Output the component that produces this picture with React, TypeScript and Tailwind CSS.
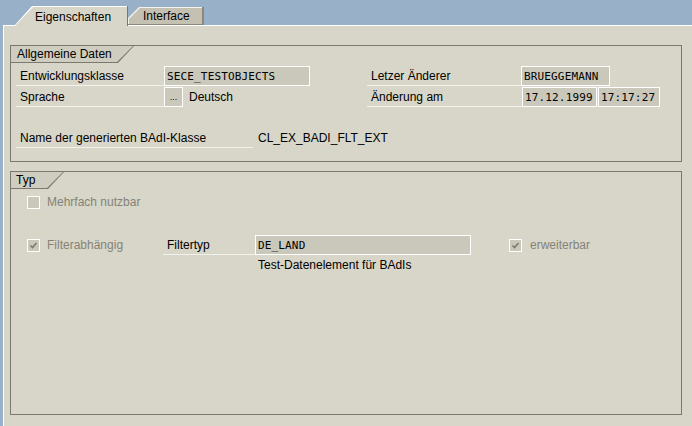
import React from "react";

const sans = "font-['Liberation_Sans',Arial,sans-serif]";
const mono = "font-['DejaVu_Sans_Mono',monospace]";

function GroupTitle({ label, outer, inner, pad }: { label: string; outer: string; inner: string; pad: string }) {
  // dark shape gives the bottom + slanted edge, the lighter one sits 1px inside it
  return (
    <div className={`${outer} h-[17px] bg-[#7b796e] [clip-path:polygon(0_0,100%_0,calc(100%_-_16px)_100%,0_100%)]`}>
      <div
        className={`${inner} ${pad} flex h-[16px] items-center bg-[#cfcdbf] text-[12px] text-black [clip-path:polygon(0_0,100%_0,calc(100%_-_16px)_100%,0_100%)]`}
      >
        {label}
      </div>
    </div>
  );
}

function Field({ value, width }: { value: string; width: string }) {
  return (
    <div className={`${width} ${mono} flex h-[20px] items-center border border-white bg-[#c9c8ba] pl-[2px] text-[11px] leading-none font-normal tracking-[0.15px] text-black`}>
      {value}
    </div>
  );
}

function Label({ text, width }: { text: string; width: string }) {
  return (
    <div className={`${width} flex h-[20px] items-center border-b border-[#f2f1ea] pl-[4px] text-[12px] text-black`}>
      {text}
    </div>
  );
}

function Check({ checked }: { checked?: boolean }) {
  return (
    <div className="flex h-[13px] w-[13px] items-center justify-center border border-white bg-[#cac8ba]">
      {checked && (
        <svg width="9" height="9" viewBox="0 0 9 9">
          <polyline points="1.5,4.5 3.5,6.5 7.5,2" fill="none" stroke="#7b796e" strokeWidth="1.6" />
        </svg>
      )}
    </div>
  );
}

export default function App() {
  return (
    <div className={`${sans} flex h-[426px] w-[692px] flex-col overflow-hidden bg-[#98b0c8]`}>
      {/* tab strip */}
      <div className="relative z-10 flex h-[25px] shrink-0 items-end pl-[14px]">
        <div className="-mb-px h-[20px] w-[114px] border-r border-[#7b796e] bg-white [clip-path:polygon(18px_0,100%_0,100%_100%,0_100%)]">
          <div className="mt-px ml-px flex h-[19px] items-center bg-[#d8d6c8] pl-[20px] text-[12px] text-black [clip-path:polygon(18px_0,100%_0,100%_100%,0_100%)]">
            Eigenschaften
          </div>
        </div>
        <div className="h-[18px] w-[76px] border-r-2 border-b border-[#8a887c] bg-[#f2f1ea] [clip-path:polygon(11px_0,100%_0,100%_100%,0_100%,0_11px)]">
          <div className="mt-px ml-px flex h-[16px] items-center bg-[#c4c1b3] pl-[14px] text-[12px] text-black [clip-path:polygon(11px_0,100%_0,100%_100%,0_100%,0_11px)]">
            Interface
          </div>
        </div>
      </div>

      {/* tab page */}
      <div className="ml-[3px] flex flex-1 flex-col border-t border-l border-white bg-[#d8d6c8] pt-[19px] pr-[10px] pl-[6px]">
        {/* Allgemeine Daten */}
        <div className="h-[117px] border border-[#7b796e]">
          <GroupTitle label="Allgemeine Daten" outer="w-[123px]" inner="w-[122px]" pad="pl-[6px]" />
          <div className="mt-[3px] flex flex-col pl-[5px]">
            <div className="flex h-[21px]">
              <div className="flex w-[351px]">
                <Label text="Entwicklungsklasse" width="w-[148px]" />
                <Field value="SECE_TESTOBJECTS" width="w-[146px]" />
              </div>
              <Label text="Letzer Änderer" width="w-[154px]" />
              <Field value="BRUEGGEMANN" width="w-[89px]" />
            </div>
            <div className="flex h-[21px]">
              <div className="flex w-[351px] items-start">
                <Label text="Sprache" width="w-[148px]" />
                <div className="flex h-[20px] w-[19px] items-end justify-center border border-white bg-[#c9c8ba] pb-[4px] text-[9px] leading-none">
                  ...
                </div>
                <div className="ml-[6px] flex h-[20px] items-center text-[12px] text-black">Deutsch</div>
              </div>
              <Label text="Änderung am" width="w-[155px]" />
              <div className="flex gap-[1px]">
                <Field value="17.12.1999" width="w-[75px]" />
                <Field value="17:17:27" width="w-[62px]" />
              </div>
            </div>
            <div className="mt-[20px] flex h-[21px] items-start">
              <Label text="Name der generierten BAdI-Klasse" width="w-[237px]" />
              <div className="flex h-[20px] items-center pl-[5px] text-[12px] text-black">CL_EX_BADI_FLT_EXT</div>
            </div>
          </div>
        </div>

        {/* Typ */}
        <div className="mt-[9px] h-[244px] border border-[#7b796e]">
          <GroupTitle label="Typ" outer="w-[53px]" inner="w-[52px]" pad="pl-[5px]" />
          <div className="mt-[3px] flex flex-col pl-[16px]">
            <div className="flex h-[20px] items-center gap-[7px]">
              <Check />
              <span className="text-[12px] text-[#858377]">Mehrfach nutzbar</span>
            </div>
            <div className="mt-[23px] flex h-[20px] items-center">
              <div className="flex w-[136px] items-center gap-[7px]">
                <Check checked />
                <span className="text-[12px] text-[#858377]">Filterabhängig</span>
              </div>
              <Label text="Filtertyp" width="w-[92px]" />
              <Field value="DE_LAND" width="w-[216px]" />
              <div className="ml-[38px] flex items-center gap-[8px]">
                <Check checked />
                <span className="text-[12px] text-[#858377]">erweiterbar</span>
              </div>
            </div>
            <div className="flex h-[20px] items-center pl-[231px] text-[12px] text-black">Test-Datenelement für BAdIs</div>
          </div>
        </div>
      </div>
    </div>
  );
}
